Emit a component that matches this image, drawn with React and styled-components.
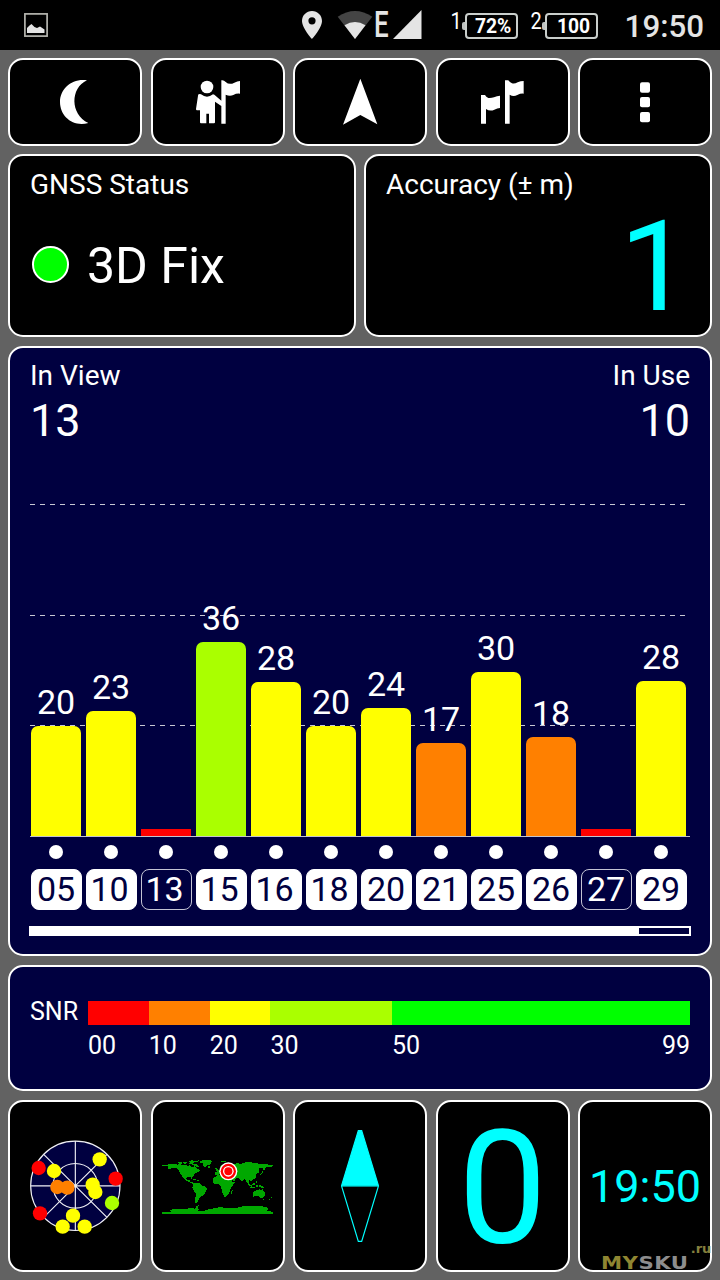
import React from 'react';
import styled, { createGlobalStyle } from 'styled-components';

const GlobalStyle = createGlobalStyle`
  * { box-sizing: border-box; }
  body { margin: 0; background: #626262; font-family: Roboto, sans-serif; color: #fff; }
`;

const Screen = styled.div`
  width: 720px;
  height: 1280px;
  background: #626262;
  overflow: hidden;
`;

/* ---------- system status bar ---------- */

const StatusBar = styled.header`
  display: flex;
  align-items: flex-start;
  height: 50px;
  padding: 0 16px 0 24px;
  background: #000;
  color: #e4e4e4;
`;

const StatusIcon = styled.svg`
  display: block;
  flex: none;
  margin: ${(p) => p.$m};
`;

const NetworkType = styled.span`
  width: 14px;
  margin: 6px 0 0 1px;
  font-size: 36px;
  font-weight: 500;
  line-height: 38px;
  transform: scaleX(0.72);
  transform-origin: left;
`;

const SimNumber = styled.span`
  width: 11px;
  margin: 9px 2px 0 ${(p) => p.$left}px;
  font-size: 23px;
  line-height: 26px;
  color: #fff;
  transform: scaleX(0.87);
  transform-origin: right;
`;

const Battery = styled.div`
  display: flex;
  align-items: center;
  margin-top: 13px;
  &::before {
    content: '';
    width: 3px;
    height: 8px;
    border-radius: 2px 0 0 2px;
    background: #bfc3c1;
  }
`;

const BatteryBody = styled.div`
  width: 53px;
  height: 26px;
  padding-left: ${(p) => p.$pad}px;
  border: 2px solid #c9cecb;
  border-radius: 4px;
  color: #fff;
  font-size: 19.3px;
  font-weight: 700;
  line-height: 23px;
  white-space: nowrap;
`;

const StatusClock = styled.time`
  margin: 8px 0 0 auto;
  font-size: 31.3px;
  font-weight: 500;
  line-height: 37px;
`;

/* ---------- dashboard ---------- */

const Dashboard = styled.main`
  display: flex;
  flex-direction: column;
  padding: 8px;
`;

const Tiles = styled.div`
  display: grid;
  grid-template-columns: repeat(${(p) => p.$cols}, 1fr);
  grid-template-rows: 100%;
  column-gap: ${(p) => (p.$cols === 5 ? 8.5 : 8)}px;
  height: ${(p) => p.$h}px;
  margin-top: ${(p) => p.$top || 0}px;
`;

const Panel = styled.section`
  min-width: 0;
  border: 2px solid #fff;
  border-radius: 15px;
  background: #000;
`;

const Tile = styled(Panel)`
  position: relative;
  display: flex;
  align-items: center;
  justify-content: center;
`;

const Glyph = styled.svg`
  flex: none;
  width: 134px;
  height: ${(p) => p.$h}px;
  margin: -2px;
  fill: #fff;
`;

const InfoPanel = styled(Panel)`
  padding: 13px 20px 0;
`;

const Label = styled.div`
  font-size: 28px;
  line-height: 32px;
`;

const FixRow = styled.div`
  display: flex;
  align-items: center;
  gap: 18px;
  margin-top: 33px;
  padding-left: 2px;
  font-size: 50px;
  line-height: 64px;
`;

const FixLed = styled.span`
  width: 37px;
  height: 37px;
  margin-top: -4px;
  border: 2px solid #fff;
  border-radius: 50%;
  background: #0f0;
`;

const AccuracyValue = styled.div`
  margin: -2px -1px 0 0;
  font-size: 127px;
  line-height: 136px;
  text-align: right;
  color: #0ff;
`;

const NavyPanel = styled(Panel)`
  height: ${(p) => p.$h}px;
  margin-top: 9px;
  padding: ${(p) => p.$pad};
  background: #000040;
`;

const Counts = styled.div`
  display: flex;
  justify-content: space-between;
`;

const Count = styled.div`
  text-align: ${(p) => p.$align || 'left'};
`;

const CountValue = styled.div`
  margin-top: 2px;
  font-size: 45px;
  line-height: 54px;
`;

const Plot = styled.div`
  position: relative;
  display: flex;
  align-items: flex-end;
  height: 389px;
  border-bottom: 1px solid #c4c4cc;
`;

const GridLine = styled.div`
  position: absolute;
  left: 0;
  width: 656px;
  bottom: ${(p) => p.$bottom}px;
  height: 1px;
  background: repeating-linear-gradient(90deg, #c8c8d4 0 5px, transparent 5px 10px);
`;

const BarSlot = styled.div`
  position: relative;
  width: 55px;
  padding-left: 1px;
`;

const BarValue = styled.div`
  width: 50px;
  margin-bottom: 3px;
  font-size: 34px;
  line-height: 42px;
  text-align: center;
`;

const Bar = styled.div`
  width: 50px;
  height: ${(p) => p.$h}px;
  border-radius: ${(p) => (p.$h > 10 ? '7px 7px 0 0' : 0)};
  background: ${(p) => p.$color};
`;

const SatRow = styled.div`
  display: flex;
`;

const Sat = styled.div`
  display: flex;
  flex-direction: column;
  align-items: center;
  width: 52px;
  margin-right: 3px;
`;

const SatDot = styled.span`
  width: 14px;
  height: 14px;
  margin: 8px 0 10px;
  border-radius: 50%;
  background: #fff;
`;

const SatId = styled.div`
  width: 51px;
  height: 41px;
  border: 1px solid ${(p) => (p.$used ? '#fff' : '#c4c4d4')};
  border-radius: 8px;
  background: ${(p) => (p.$used ? '#fff' : 'transparent')};
  color: ${(p) => (p.$used ? '#000040' : '#fff')};
  font-size: 34px;
  line-height: 39px;
  text-align: center;
  text-indent: ${(p) => (p.$lead1 ? -3 : 0)}px;
`;

const ScrollTrack = styled.div`
  width: 662px;
  height: 10px;
  margin: 16px -1px 0;
  border: 2px solid #fff;
`;

const ScrollThumb = styled.div`
  width: 608px;
  height: 6px;
  background: #fff;
`;

const SnrGrid = styled.div`
  display: grid;
  grid-template-columns: 58px 602px;
  grid-template-rows: 24px auto;
  font-size: 25px;
  line-height: 28px;
`;

const SnrScale = styled.div`
  display: flex;
  height: 24px;
`;

const SnrBand = styled.div`
  flex: ${(p) => p.$span} 1 0;
  background: ${(p) => p.$color};
`;

const SnrTitle = styled.div`
  margin-top: -3px;
`;

const SnrTicks = styled.div`
  grid-column: 2;
  display: flex;
  margin-top: 7px;
`;

const SnrTick = styled.div`
  flex: ${(p) => p.$span} 1 0;
  display: flex;
  justify-content: space-between;
`;

const Heading = styled.div`
  margin-top: 4px;
  font-size: 158.5px;
  line-height: 160px;
  color: #0ff;
`;

const Clock = styled.time`
  margin-top: 2px;
  font-size: 45px;
  line-height: 54px;
  color: #0ff;
`;

const Watermark = styled.div`
  position: absolute;
  left: 21px;
  bottom: -2px;
  font: 700 18px/18px 'DejaVu Sans', sans-serif;
  letter-spacing: 0.4px;
  color: #8d8d8d;
  transform: scaleX(1.18);
  transform-origin: left;
  white-space: nowrap;
`;

const WatermarkTint = styled.span`
  color: #8f8632;
`;

const WatermarkSuffix = styled.span`
  position: absolute;
  left: 76px;
  top: -14px;
  font-size: 13px;
  letter-spacing: 0;
  color: #86803e;
  transform: scaleX(0.85);
  transform-origin: left;
`;

const YELLOW = '#ff0';
const ORANGE = '#ff8000';
const RED = '#f00';
const LIME = '#af0';

const satellites = [
  { id: '05', snr: 20, h: 110, color: YELLOW },
  { id: '10', snr: 23, h: 125, color: YELLOW },
  { id: '13', h: 7, color: RED },
  { id: '15', snr: 36, h: 194, color: LIME },
  { id: '16', snr: 28, h: 154, color: YELLOW },
  { id: '18', snr: 20, h: 110, color: YELLOW },
  { id: '20', snr: 24, h: 128, color: YELLOW },
  { id: '21', snr: 17, h: 93, color: ORANGE },
  { id: '25', snr: 30, h: 164, color: YELLOW },
  { id: '26', snr: 18, h: 99, color: ORANGE },
  { id: '27', h: 7, color: RED },
  { id: '29', snr: 28, h: 155, color: YELLOW },
];

const bands = [
  { from: '00', span: 10, color: RED },
  { from: '10', span: 10, color: ORANGE },
  { from: '20', span: 10, color: YELLOW },
  { from: '30', span: 20, color: LIME },
  { from: '50', to: '99', span: 49, color: '#0f0' },
];

const skyDots = [
  [116, 234, RED], [162, 243, YELLOW], [299, 208, YELLOW], [347, 266, RED],
  [172, 291, ORANGE], [202, 293, ORANGE], [278, 284, YELLOW], [286, 306, YELLOW],
  [336, 339, LIME], [120, 370, RED], [219, 377, YELLOW], [188, 410, YELLOW], [254, 410, YELLOW],
];

function MoonIcon() {
  return (
    <Glyph $h={88} viewBox="24 174 402 264">
      <path d="M261 241C216 234 180 266 180 306C180 348 218 382 265 369C210 344 210 264 261 241Z" />
    </Glyph>
  );
}

function PersonFlagIcon() {
  return (
    <Glyph $h={88} viewBox="3 24 402 264">
      <circle cx="171" cy="111" r="19" />
      <path d="M146 133Q149 131 153 133Q171 147 189 133L193 134L214 152V91Q221 89 227 96Q238 106 253 98Q262 93 270 93V131Q259 130 250 135Q239 140 227 134V221H214V168L195 155V217Q195 220 192 220H177V191H169V220H153Q150 220 150 217V181H141Q138 181 138 177L144 137Q144 134 146 133Z" />
    </Glyph>
  );
}

function ArrowIcon() {
  return (
    <Glyph $h={88} viewBox="429 24 402 264">
      <path d="M631 86L682 223L631 195L579 224Z" />
    </Glyph>
  );
}

function FlagsIcon() {
  return (
    <Glyph $h={88} viewBox="18 24 402 264">
      <path d="M153 135H165Q168 141 175 144Q183 145 192 142Q201 137 210 137V174Q202 174 193 179Q180 185 168 177V221H153Z" />
      <path d="M225 91H235Q239 97 246 100Q254 102 263 97Q272 93 281 93V131Q272 130 262 135Q250 141 239 134V221H225Z" />
    </Glyph>
  );
}

function MoreIcon() {
  return (
    <Glyph $h={88} viewBox="444 24 402 264">
      <rect x="630" y="97" width="30" height="31" rx="6" />
      <rect x="630" y="141" width="30" height="31" rx="6" />
      <rect x="630" y="186" width="30" height="31" rx="6" />
    </Glyph>
  );
}

function SkyPlot() {
  return (
    <Glyph $h={172} viewBox="24 30 402 516">
      <g fill="#000040" stroke="#f0f0f6" strokeWidth="3.4">
        <circle cx="226" cy="287.5" r="134" />
        <circle cx="226" cy="287.5" r="67" />
        <path d="M226 153V422M92 287.5H360M131 193L321 382M321 193L131 382" />
      </g>
      {skyDots.map(([x, y, color]) => (
        <circle key={`${x}-${y}`} cx={x} cy={y} r="21.5" fill={color} />
      ))}
    </Glyph>
  );
}

function WorldMap() {
  return (
    <Glyph $h={172} viewBox="18 -120 402 516">
      <g fill="#00a800" shapeRendering="crispEdges">
        <path d="M52 75H66L69 72L80 73L88 71L96 74L105 72L112 75L122 74L128 78L134 76L141 83L150 77L152 84L162 88L166 93L158 97L151 99L147 106L141 111L140 117L137 110L127 111L123 116L127 121L134 119L135 126L142 127L149 132L145 132L136 128L124 123L116 116L111 108L105 101L103 93L97 86L89 83L81 83L74 87L68 87L70 80L66 77H52Z" />
        <path d="M97 69L105 65L113 68L119 65L129 66L123 71L113 70L105 72ZM126 63L141 61L151 63L162 61L158 65L149 67L143 71L154 72L163 80L157 82L149 77L140 73L131 71L137 66Z" />
        <path d="M164 64L177 60L196 61L200 65L196 74L188 76L181 82L176 79L173 70L162 67Z" />
        <path d="M145 116H153V119H145ZM156 121H162V124H156ZM188 79H196V83H188ZM229 63H242V66H229Z" />
        <path d="M145 131L158 128L165 131L171 136L180 140L187 144L184 153L179 160L174 166L167 171L161 178L157 188L150 188L151 176L153 161L146 151L142 142Z" />
        <path d="M211 110L221 104L229 108L241 110L251 108L259 118L262 125L270 126L263 136L257 145L253 157L246 168L239 171L234 164L231 153L228 141L223 133H210L203 126V118ZM259 155L263 150L261 162L256 166Z" />
        <path d="M209 104V96L217 96L213 91L211 84L217 85L222 92L228 86L226 78L235 73L247 72L259 75L274 71L289 71L298 68L311 65L325 69L343 71L359 71L372 74L383 75L382 80L371 80L363 83L358 91L353 91L354 83L344 84L341 91L342 98L334 101L333 109L331 115L323 118L318 124L313 119L311 129L305 126L301 119L296 118L291 127L287 120L282 115L274 115L267 124L259 119L255 107L242 105L238 98L228 99L221 104Z" />
        <path d="M272 68H283V73H272ZM350 93H354V99L345 106L342 105L350 100ZM307 127L315 133L322 138L319 141L310 134ZM320 132L330 127L328 136L322 135ZM332 123H336V130H332ZM316 142H330V145H316ZM334 134H339V140H334ZM341 135L350 137L357 143L352 144L343 140Z" />
        <path d="M324 158L331 152L338 151L343 147L349 152L353 148L360 160V167L354 174L346 173L341 168L333 168L325 170ZM354 176H358V179H354ZM377 171H380V175H377ZM372 176H376V180H372Z" />
        <path d="M52 216L78 216L76 211L82 207L106 206L119 208L136 204L149 206L154 203L153 198L161 196L158 202L163 210L155 214L174 214L187 209L205 205L222 202L247 203L271 205L286 200L305 198L326 198L344 198L367 202L370 207L365 213L383 215V221H52Z" />
      </g>
      <circle cx="250" cy="94" r="27" fill="#fff" />
      <circle cx="250" cy="94" r="23" fill="#f00" />
      <circle cx="250" cy="94" r="16" fill="#fff" />
      <circle cx="250" cy="94" r="12" fill="#f00" />
    </Glyph>
  );
}

function Compass() {
  return (
    <Glyph $h={172} viewBox="9 30 402 516">
      <g stroke="#0ff" strokeWidth="3.6">
        <path d="M155 289L205 454H215L265 289Z" fill="none" />
        <path d="M205 122H215L265 286H155Z" fill="#0ff" />
      </g>
      <path d="M157 289H263" stroke="#007a7a" strokeWidth="3" />
    </Glyph>
  );
}

export default function App() {
  return (
    <Screen>
      <GlobalStyle />
      <StatusBar>
        <StatusIcon $m="13px 0 0" width="24" height="24" viewBox="0 0 24 24">
          <rect x="0.9" y="0.9" width="22.2" height="22.2" fill="none" stroke="#b5b5af" strokeWidth="1.7" />
          <path d="M3 20V15L5.5 12.5L7.5 11L10.5 14L13 15L16 13.5L20.5 16.5V20Z" fill="#e4e4e4" />
        </StatusIcon>
        <StatusIcon $m="11px 0 0 254px" width="20" height="28" viewBox="0 0 20 28" fill="#e4e4e4">
          <path fillRule="evenodd" d="M10 0C4.4 0 0 4.4 0 10C0 17 10 28 10 28S20 17 20 10C20 4.4 15.6 0 10 0ZM10 6.2A3.6 3.6 0 1 1 10 13.4A3.6 3.6 0 0 1 10 6.2Z" />
        </StatusIcon>
        <StatusIcon $m="11px 0 0 15px" width="36" height="28" viewBox="0 0 36 28">
          <path d="M0.7 5.7Q18-5.7 35.3 5.7L18 28Z" fill="#444" />
          <path d="M7.5 14.3Q18 7.5 28.5 14.3L18 28Z" fill="#e4e4e4" />
        </StatusIcon>
        <NetworkType>E</NetworkType>
        <StatusIcon $m="10px 0 0 5px" width="29" height="29" viewBox="0 0 29 29" fill="#e4e4e4">
          <path d="M0 29L28.5 0V29Z" />
        </StatusIcon>
        <SimNumber $left={27}>1</SimNumber>
        <Battery><BatteryBody $pad={8}>72%</BatteryBody></Battery>
        <SimNumber $left={11}>2</SimNumber>
        <Battery><BatteryBody $pad={10}>100</BatteryBody></Battery>
        <StatusClock>19:50</StatusClock>
      </StatusBar>

      <Dashboard>
        <Tiles $cols={5} $h={88}>
          <Tile><MoonIcon /></Tile>
          <Tile><PersonFlagIcon /></Tile>
          <Tile><ArrowIcon /></Tile>
          <Tile><FlagsIcon /></Tile>
          <Tile><MoreIcon /></Tile>
        </Tiles>

        <Tiles $cols={2} $h={183} $top={8}>
          <InfoPanel>
            <Label>GNSS Status</Label>
            <FixRow><FixLed />3D Fix</FixRow>
          </InfoPanel>
          <InfoPanel>
            <Label>Accuracy (± m)</Label>
            <AccuracyValue>1</AccuracyValue>
          </InfoPanel>
        </Tiles>

        <NavyPanel $h={610} $pad="12px 20px 0">
          <Counts>
            <Count><Label>In View</Label><CountValue>13</CountValue></Count>
            <Count $align="right"><Label>In Use</Label><CountValue>10</CountValue></Count>
          </Counts>
          <Plot>
            <GridLine $bottom={331} />
            <GridLine $bottom={220} />
            <GridLine $bottom={110} />
            {satellites.map((s) => (
              <BarSlot key={s.id}>
                {s.snr && <BarValue>{s.snr}</BarValue>}
                <Bar $h={s.h} $color={s.color} />
              </BarSlot>
            ))}
          </Plot>
          <SatRow>
            {satellites.map((s) => (
              <Sat key={s.id}>
                <SatDot />
                <SatId $used={!!s.snr} $lead1={s.id[0] === '1'}>{s.id}</SatId>
              </Sat>
            ))}
          </SatRow>
          <ScrollTrack><ScrollThumb /></ScrollTrack>
        </NavyPanel>

        <NavyPanel $h={126} $pad="34px 20px 0">
          <SnrGrid>
            <SnrTitle>SNR</SnrTitle>
            <SnrScale>
              {bands.map((b) => <SnrBand key={b.from} $span={b.span} $color={b.color} />)}
            </SnrScale>
            <SnrTicks>
              {bands.map((b) => (
                <SnrTick key={b.from} $span={b.span}>
                  <span>{b.from}</span>
                  {b.to && <span>{b.to}</span>}
                </SnrTick>
              ))}
            </SnrTicks>
          </SnrGrid>
        </NavyPanel>

        <Tiles $cols={5} $h={172} $top={9}>
          <Tile><SkyPlot /></Tile>
          <Tile><WorldMap /></Tile>
          <Tile><Compass /></Tile>
          <Tile><Heading>0</Heading></Tile>
          <Tile>
            <Clock>19:50</Clock>
            <Watermark>
              <WatermarkTint>MY</WatermarkTint>SKU<WatermarkSuffix>.ru</WatermarkSuffix>
            </Watermark>
          </Tile>
        </Tiles>
      </Dashboard>
    </Screen>
  );
}
